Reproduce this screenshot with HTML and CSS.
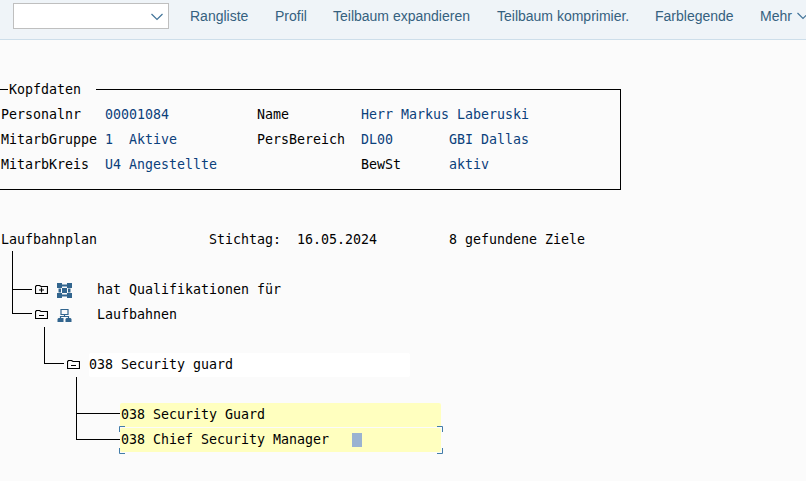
FILE: index.html
```html
<!DOCTYPE html>
<html lang="de">
<head>
<meta charset="utf-8">
<title>Laufbahnplan</title>
<link rel="stylesheet" href="styles.css">
</head>
<body>
<header class="toolbar">
  <div class="select"><svg width="12" height="8" viewBox="0 0 12 8"><path d="M.5 1 6 6.5 11.500 1" /></svg></div>
  <nav class="menu">
    <span class="m1">Rangliste</span>
    <span class="m2">Profil</span>
    <span class="m3">Teilbaum expandieren</span>
    <span class="m4">Teilbaum komprimier.</span>
    <span class="m5">Farblegende</span>
    <span class="m6">Mehr <svg width="12" height="8" viewBox="0 0 12 8"><path d="M.5 1 6 6.500 11.500 1" /></svg></span>
  </nav>
</header>
<main>
  <section class="head">
    <div class="title"><i class="rule"></i><b>Kopfdaten</b><i class="rule long"></i></div>
    <div class="row"><span class="c0">Personalnr</span><span class="c13 v">00001084</span><span class="c32">Name</span><span class="c45 v">Herr Markus Laberuski</span></div>
    <div class="row"><span class="c0">MitarbGruppe</span><span class="c13 v">1  Aktive</span><span class="c32">PersBereich</span><span class="c45 v">DL00</span><span class="c56 v">GBI Dallas</span></div>
    <div class="row"><span class="c0">MitarbKreis</span><span class="c13 v">U4 Angestellte</span><span class="c45">BewSt</span><span class="c56 v">aktiv</span></div>
  </section>
  <section class="tree">
    <div class="row"><span class="c0">Laufbahnplan</span><span class="c26">Stichtag:  16.05.2024</span><span class="c56">8 gefundene Ziele</span></div>
    <div class="branch first">
      <i class="line a"></i><i class="line b"></i>
    </div>
    <div class="row">
      <svg class="folder c4" width="13" height="9" viewBox="0 0 13 9"><path d="M.5 8.500V1.500L1.500.5H4.500L6 1.500H12.500V8.500ZM4 5H9M6.500 2.500V7.500" /></svg>
      <svg class="obj c7" width="15" height="15" viewBox="0 0 15 15"><path d="M0 0H5V5H0ZM10 0H15V5H10ZM0 10H5V15H0ZM10 10H15V15H10ZM5 5H10V10H5ZM5 1.500H10V3.500H5ZM5 11.500H10V13.500H5ZM1.500 5.500H4V9.500H1.500ZM11 5.500H13.500V9.500H11Z" /></svg>
      <span class="c12">hat Qualifikationen für</span>
    </div>
    <div class="row">
      <svg class="folder c4" width="13" height="9" viewBox="0 0 13 9"><path d="M.5 8.500V1.500L1.500.5H4.500L6 1.500H12.500V8.500ZM4 5.500H9" /></svg>
      <svg class="org c7" width="15" height="15" viewBox="0 0 15 15"><path d="M4 1.500H11V6.500H4ZM7.500 6.500V8.500M3.500 11V8.500H11.500V11" /><path class="solid" d="M1.500 10H6.500V14H.5V11ZM9.500 10H13.500L14.500 11V14H8.500V11Z" /></svg>
      <span class="c12">Laufbahnen</span>
    </div>
    <div class="branch second"><i class="line c"></i></div>
    <div class="row">
      <svg class="folder c8" width="13" height="9" viewBox="0 0 13 9"><path d="M.5 8.500V1.500L1.500.5H4.500L6 1.500H12.500V8.500ZM4 5.500H9" /></svg>
      <span class="c11 bar white">038 Security guard</span>
    </div>
    <div class="branch third"><i class="line d"></i><i class="line e"></i></div>
    <div class="row"><span class="c15 bar">038 Security Guard</span></div>
    <div class="row"><span class="c15 bar focus">038 Chief Security Manager<i class="cursor"></i><svg class="frame" width="324" height="28" viewBox="0 0 324 28"><path d="M.5 6V.5H6M318 .5H323.500V6M323.500 22V27.500H318M6 27.500H.5V22" /></svg></span></div>
  </section>
</main>
</body>
</html>
```
FILE: styles.css
```css
* { box-sizing: border-box; }
body {
  margin: 0;
  width: 806px;
  height: 481px;
  overflow: hidden;
  background: #fbfbfb;
  color: #000;
  font: 13.29px/25px "DejaVu Sans Mono", "Liberation Mono", monospace;
}
svg { display: block; fill: none; stroke-width: 1; }
.toolbar {
  display: flex;
  height: 40px;
  padding: 3px 0 0 13px;
  background: #eff4f8;
  border-bottom: 1px solid #cddeea;
  color: #35617f;
  font: 14px/26px "Liberation Sans", Arial, sans-serif;
}
.toolbar svg { flex: none; stroke: #427499; stroke-width: 1.2; }
.select {
  display: flex;
  flex: none;
  align-items: center;
  justify-content: flex-end;
  width: 156px;
  height: 26px;
  padding: 2px 5px 0 0;
  background: #fff;
  border: 1px solid #bfbfbf;
}
.menu { display: flex; flex: none; height: 26px; padding-left: 21px; white-space: nowrap; }
.menu span { flex: none; }
.m1 { width: 85px; }
.m2 { width: 58px; }
.m3 { width: 164px; }
.m4 { width: 158px; }
.m5 { width: 105px; }
.m6 { display: flex; align-items: center; gap: 5px; }

main { padding-top: 37px; }
.head {
  position: relative;
  width: 621px;
  height: 113px;
}
.head::after {
  content: "";
  position: absolute;
  top: 12px;
  right: 0;
  bottom: 0;
  left: 0;
  border: solid #000;
  border-width: 0 1px 1px 0;
}
.title { display: flex; height: 25px; }
.title b { width: 88px; font-weight: 400; padding-left: 1px; }
.rule { width: 8px; height: 1px; margin-top: 12px; background: #000; }
.rule.long { flex: 1; }
.row {
  display: grid;
  grid-template-columns: repeat(100, 8px);
  height: 25px;
  padding-left: 1px;
  white-space: pre;
}
.row > * { grid-row: 1; grid-column-end: span 1; }
.v { color: #0b417c; }
.c0 { grid-column-start: 1; }
.c4 { grid-column-start: 5; }
.c7 { grid-column-start: 8; }
.c8 { grid-column-start: 9; }
.c11 { grid-column-start: 12; }
.c12 { grid-column-start: 13; }
.c13 { grid-column-start: 14; }
.c15 { grid-column-start: 16; }
.c26 { grid-column-start: 27; }
.c32 { grid-column-start: 33; }
.c45 { grid-column-start: 46; }
.c56 { grid-column-start: 57; }

.tree { padding-top: 37px; }
.branch { height: 25px; display: flow-root; }
.line {
  display: block;
  border: solid #000;
  border-width: 0 0 1px 1px;
}
.first { padding-left: 12px; }
.a { width: 20px; height: 39px; margin-top: -1px; }
.b { width: 20px; height: 24px; }
.second { padding-left: 44px; }
.c { width: 20px; height: 37px; }
.third { padding-left: 76px; }
.d { width: 44px; height: 37px; }
.e { width: 44px; height: 26px; }

.folder { stroke: #000; stroke-width: 1.15; margin: 8px 0 0 2px; }
.obj { margin-top: 6px; fill: #32658e; }
.org { margin-top: 6px; stroke: #32658e; stroke-width: 1.2; }
.solid { fill: #32658e; stroke: none; }

.bar {
  position: relative;
  width: 321px;
  height: 24px;
  margin: 1px 0 0 -1px;
  padding-left: 1px;
  line-height: 24px;
  background: #ffffbf;
  border-radius: 2px;
}
.white { margin-left: 0; padding-left: 0; background: #fff; }
.cursor {
  position: absolute;
  left: 232px;
  top: 5px;
  width: 10px;
  height: 14px;
  background: #9ab3d1;
}
.frame {
  position: absolute;
  left: -1px;
  top: -2px;
  stroke: #427ca9;
}
```
